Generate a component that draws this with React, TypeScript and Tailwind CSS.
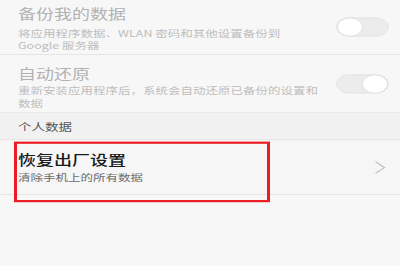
import React from "react";

function Toggle({ on }: { on: boolean }) {
  return (
    <div
      className={`w-[53px] h-[26px] rounded-full bg-[#ececec] border border-[#e2e2e2] flex items-center px-[1px] ${
        on ? "justify-end bg-[#e6e6e6]" : "justify-start"
      }`}
    >
      <div className="w-[24px] h-[24px] rounded-full bg-white shadow-[0_0_2px_rgba(0,0,0,0.12)]" />
    </div>
  );
}

export default function App() {
  const font = { fontFamily: '"Noto Sans CJK SC", "Noto Sans", sans-serif' };
  return (
    <div className="w-[400px] h-[266px] overflow-hidden bg-[#f7f7f7]" style={font}>
      <div className="relative w-[400px] h-[364px] origin-top scale-y-[0.73] bg-[#f7f7f7]">
        {/* Row 1 */}
        <div className="h-[75px] flex items-center justify-between pl-[18px] pr-[11px] border-b-[1.4px] border-[#dedede]">
          <div className="w-[305px] self-start pt-[6px] whitespace-nowrap">
            <div className="text-[18px] leading-[24px] text-[#b2b2b2]">备份我的数据</div>
            <div className="mt-[6px] text-[12.5px] leading-[17px] text-[#bdbdbd]">
              <div>将应用程序数据、WLAN 密码和其他设置备份到</div>
              <div>Google 服务器</div>
            </div>
          </div>
          <Toggle on={false} />
        </div>
        {/* Row 2 */}
        <div className="h-[80px] flex items-center justify-between pl-[18px] pr-[11px] border-b-[1.4px] border-[#dedede]">
          <div className="w-[305px] self-start pt-[13px] whitespace-nowrap">
            <div className="text-[18px] leading-[24px] text-[#b2b2b2]">自动还原</div>
            <div className="mt-[3px] text-[12.5px] leading-[17px] text-[#bdbdbd]">
              <div>重新安装应用程序后，系统会自动还原已备份的设置和</div>
              <div>数据</div>
            </div>
          </div>
          <Toggle on={true} />
        </div>
        {/* Section header */}
        <div className="h-[37px] flex items-center pl-[18px] bg-[#f1f1f1] border-b-[1.4px] border-[#dedede]">
          <span className="text-[13.5px] text-[#555555]">个人数据</span>
        </div>
        {/* Factory reset row */}
        <div className="h-[75px] flex items-center justify-between pl-[18px] pr-[14px] bg-[#f6f6f6] border-b-[1.4px] border-[#dedede]">
          <div className="self-start pt-[14px] whitespace-nowrap">
            <div className="text-[18px] leading-[24px] font-medium text-[#1a1a1a]">恢复出厂设置</div>
            <div className="mt-[5px] text-[12.5px] leading-[16px] text-[#6a6a6a]">清除手机上的所有数据</div>
          </div>
          <svg width="12" height="19" viewBox="0 0 12 19" fill="none">
            <polyline points="1.5,1.5 10.5,9.5 1.5,17.5" stroke="#bdbdbd" strokeWidth="1.3" />
          </svg>
        </div>
        {/* Red annotation box */}
        <div className="absolute left-[14px] top-[194px] w-[256px] h-[83px] border-[3px] border-[#ec1c24]" />
      </div>
    </div>
  );
}
